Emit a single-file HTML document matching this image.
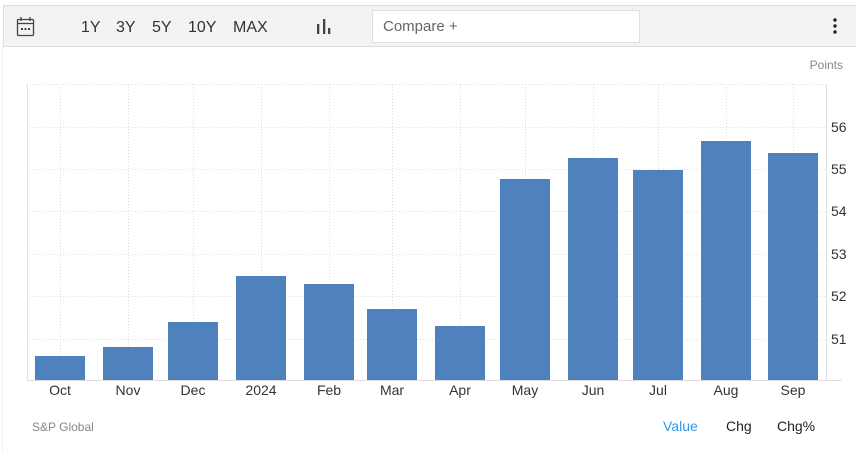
<!DOCTYPE html>
<html><head><meta charset="utf-8"><style>
body{margin:0;width:856px;height:451px;background:#fff;font-family:"Liberation Sans",Arial,sans-serif;position:relative;overflow:hidden}
.lb{position:absolute;left:2px;top:46px;width:1px;height:405px;background:#eee}
.tb{position:absolute;left:3px;top:5px;width:853px;height:40px;background:#f3f3f3;border-top:1px solid #ddd;border-bottom:1px solid #ddd;border-left:1px solid #ddd}
.t{position:absolute;top:13px;font-size:16px;color:#333}
.cmp{position:absolute;left:368px;top:4px;width:266px;height:31px;background:#fff;border:1px solid #e0e0e0;font-size:15px;color:#666;line-height:31px;padding-left:10px;box-sizing:border-box;width:268px;height:33px}
svg{position:absolute;left:0;top:0}
</style></head><body>
<div class="lb"></div>
<div class="tb">
<svg width="40" height="40" style="left:12px;top:10px"><g fill="none" stroke="#444" stroke-width="1.3"><rect x="1.5" y="3.5" width="16" height="16" rx="1"/><line x1="1.5" y1="7.5" x2="17.5" y2="7.5"/><line x1="5" y1="1" x2="5" y2="5"/><line x1="14" y1="1" x2="14" y2="5"/></g><g fill="#444"><rect x="5" y="12" width="2" height="2"/><rect x="8.5" y="12" width="2" height="2"/><rect x="12" y="12" width="2" height="2"/></g></svg>
<span class="t" style="left:77px">1Y</span>
<span class="t" style="left:112px">3Y</span>
<span class="t" style="left:148px">5Y</span>
<span class="t" style="left:184px">10Y</span>
<span class="t" style="left:229px">MAX</span>
<svg width="20" height="20" style="left:310px;top:12px"><g fill="#444"><rect x="3" y="6" width="2.3" height="10"/><rect x="9" y="1" width="2.3" height="15"/><rect x="14" y="10" width="2.3" height="6"/></g></svg>
<div class="cmp">Compare +</div>
<svg width="10" height="20" style="left:826px;top:10px"><g fill="#222"><circle cx="5" cy="4" r="1.7"/><circle cx="5" cy="10" r="1.7"/><circle cx="5" cy="16" r="1.7"/></g></svg>
</div>
<svg width="856" height="451">
<text x="843" y="69" font-size="12" fill="#888" text-anchor="end" font-family="Liberation Sans">Points</text>
<g stroke="#ddd" stroke-dasharray="1,2" stroke-width="1">
<line x1="27" y1="84.5" x2="826" y2="84.5"/>
<line x1="27" y1="127.5" x2="826" y2="127.5"/>
<line x1="27" y1="169.5" x2="826" y2="169.5"/>
<line x1="27" y1="211.5" x2="826" y2="211.5"/>
<line x1="27" y1="254.5" x2="826" y2="254.5"/>
<line x1="27" y1="296.5" x2="826" y2="296.5"/>
<line x1="27" y1="339.5" x2="826" y2="339.5"/>
<line x1="60.5" y1="84" x2="60.5" y2="380"/><line x1="128.5" y1="84" x2="128.5" y2="380"/><line x1="193.5" y1="84" x2="193.5" y2="380"/><line x1="261.5" y1="84" x2="261.5" y2="380"/><line x1="329.5" y1="84" x2="329.5" y2="380"/><line x1="392.5" y1="84" x2="392.5" y2="380"/><line x1="460.5" y1="84" x2="460.5" y2="380"/><line x1="525.5" y1="84" x2="525.5" y2="380"/><line x1="593.5" y1="84" x2="593.5" y2="380"/><line x1="658.5" y1="84" x2="658.5" y2="380"/><line x1="726.5" y1="84" x2="726.5" y2="380"/><line x1="793.5" y1="84" x2="793.5" y2="380"/>
</g>
<line x1="27.5" y1="84" x2="27.5" y2="381" stroke="#e0e0e0"/>
<line x1="826.5" y1="84" x2="826.5" y2="381" stroke="#e0e0e0"/>
<line x1="27" y1="380.5" x2="842" y2="380.5" stroke="#ddd"/>
<g fill="#4f81bd">
<rect x="35" y="356" width="50" height="24"/>
<rect x="103" y="347" width="50" height="33"/>
<rect x="168" y="322" width="50" height="58"/>
<rect x="236" y="276" width="50" height="104"/>
<rect x="304" y="284" width="50" height="96"/>
<rect x="367" y="309" width="50" height="71"/>
<rect x="435" y="326" width="50" height="54"/>
<rect x="500" y="179" width="50" height="201"/>
<rect x="568" y="158" width="50" height="222"/>
<rect x="633" y="170" width="50" height="210"/>
<rect x="701" y="141" width="50" height="239"/>
<rect x="768" y="153" width="50" height="227"/>
</g>
<g font-size="14" fill="#333" font-family="Liberation Sans">
<text x="831" y="132">56</text><text x="831" y="174">55</text><text x="831" y="216">54</text><text x="831" y="259">53</text><text x="831" y="301">52</text><text x="831" y="344">51</text>
</g>
<g font-size="14" fill="#333" text-anchor="middle" font-family="Liberation Sans">
<text x="60" y="395">Oct</text><text x="128" y="395">Nov</text><text x="193" y="395">Dec</text><text x="261" y="395">2024</text><text x="329" y="395">Feb</text><text x="392" y="395">Mar</text><text x="460" y="395">Apr</text><text x="525" y="395">May</text><text x="593" y="395">Jun</text><text x="658" y="395">Jul</text><text x="726" y="395">Aug</text><text x="793" y="395">Sep</text>
</g>
<text x="32" y="431" font-size="12" fill="#888" font-family="Liberation Sans">S&amp;P Global</text>
<g font-size="14" font-family="Liberation Sans">
<text x="663" y="431" fill="#2f9ae8">Value</text><text x="726" y="431" fill="#222">Chg</text><text x="777" y="431" fill="#222">Chg%</text>
</g>
</svg>
</body></html>
